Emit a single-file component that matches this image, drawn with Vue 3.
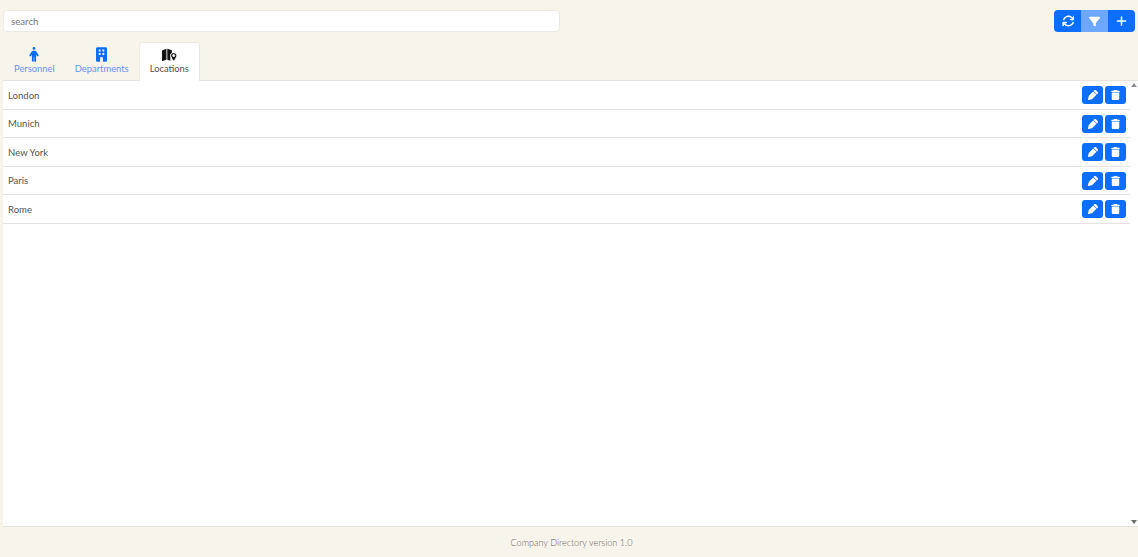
<script setup>
const locations = ['London', 'Munich', 'New York', 'Paris', 'Rome']
</script>

<template>
  <div class="page">
    <header class="top">
      <input class="search" type="text" placeholder="search" />
      <div class="btn-group">
        <button class="gbtn" aria-label="refresh">
          <svg viewBox="0 0 512 512" width="12" height="12"><path fill="#fff" d="M105 203c9-25 23-48 43-68 71-71 186-71 257 0l19 20h-56c-18 0-32 14-32 32s14 32 32 32h128c18 0 32-14 32-32V59c0-18-14-32-32-32s-32 14-32 32v51l-18-18C358-5 202-5 105 92 78 119 59 151 47 185c-6 17 3 35 19 41 17 6 35-3 39-23zM39 289c-5 1-10 4-14 8-4 4-7 9-8 14-1 3-1 6-1 9v133c0 18 14 32 32 32s32-14 32-32v-51l18 18c97 97 253 97 350 0 27-27 47-59 58-93 6-17-3-35-19-41-17-6-35 3-41 20-9 25-23 48-43 68-71 71-186 71-257 0l-19-20h56c18 0 32-14 32-32s-14-32-32-32H48c-3 0-6 0-9 1z"/></svg>
        </button>
        <button class="gbtn light" aria-label="filter">
          <svg viewBox="0 0 512 512" width="11" height="11"><path fill="#fff" d="M4 56c6-14 20-24 36-24h432c16 0 30 10 36 24 6 15 3 31-7 43L320 321v127c0 12-7 23-18 28s-24 4-33-3l-64-48c-8-6-13-15-13-25v-79L11 99C1 87-2 71 4 56z"/></svg>
        </button>
        <button class="gbtn" aria-label="add">
          <svg viewBox="0 0 448 512" width="11" height="12"><path fill="#fff" d="M256 80c0-18-14-32-32-32s-32 14-32 32v144H48c-18 0-32 14-32 32s14 32 32 32h144v144c0 18 14 32 32 32s32-14 32-32V288h144c18 0 32-14 32-32s-14-32-32-32H256V80z"/></svg>
        </button>
      </div>
    </header>

    <nav class="tabs">
      <div class="tab">
        <svg viewBox="0 0 320 512" width="10" height="15"><path fill="#0d6efd" d="M112 48a48 48 0 1 1 96 0 48 48 0 1 1-96 0zm40 304v128c0 18-14 32-32 32s-32-14-32-32V257l-29 47c-9 15-29 20-44 11s-20-29-10-44l58-96c18-29 49-47 83-47h28c34 0 65 18 83 47l58 96c9 15 5 35-10 44s-35 4-44-11l-29-47v223c0 18-14 32-32 32s-32-14-32-32V352h-16z"/></svg>
        <span>Personnel</span>
      </div>
      <div class="tab">
        <svg viewBox="0 0 384 512" width="11" height="15"><path fill="#0d6efd" fill-rule="evenodd" d="M48 0C22 0 0 22 0 48v416c0 26 22 48 48 48h288c26 0 48-22 48-48V48c0-26-22-48-48-48H48zm48 80h64v72H96V80zm128 0h64v72h-64V80zM96 200h64v72H96v-72zm128 0h64v72h-64v-72zM144 352h96v160h-96V352z"/></svg>
        <span>Departments</span>
      </div>
      <div class="tab active">
        <svg viewBox="0 0 576 512" width="15" height="14"><path fill="#111" d="M24 70 170 20v420L24 490C10 494 0 486 0 474V100c0-14 10-26 24-30zM204 20l176 50v90l-60 80v240l-116-40V20z"/><path fill="#111" stroke="#fff" stroke-width="30" fill-rule="evenodd" d="M450 170c-66 0-116 48-116 108 0 54 72 160 100 198 8 10 24 10 32 0 28-38 100-144 100-198 0-60-50-108-116-108zm0 66a42 42 0 1 1 0 84 42 42 0 1 1 0-84z"/></svg>
        <span>Locations</span>
      </div>
    </nav>

    <main class="panel">
      <div class="list">
        <div v-for="loc in locations" :key="loc" class="row">
          <span class="name">{{ loc }}</span>
          <div class="actions">
            <button class="ibtn" aria-label="edit">
              <svg viewBox="0 0 512 512" width="10" height="10"><path fill="#fff" d="M410 19c-25-25-65-25-90 0l-35 35 173 173 35-35c25-25 25-65 0-90l-83-83zM262 77 50 289c-7 7-12 16-15 25L1 469c-3 10 0 21 7 29s19 11 29 8l155-34c9-3 18-8 25-15l218-209L262 77z"/></svg>
            </button>
            <button class="ibtn" aria-label="delete">
              <svg viewBox="0 0 448 512" width="9" height="10"><path fill="#fff" d="M135 18C140 7 152 0 164 0h120c12 0 24 7 29 18l7 14h96c18 0 32 14 32 32s-14 32-32 32H32C14 96 0 82 0 64s14-32 32-32h96l7-14zM32 128h384v320c0 35-29 64-64 64H96c-35 0-64-29-64-64V128z"/></svg>
            </button>
          </div>
        </div>
      </div>
      <div class="scrollbar">
        <span class="arrow up"></span>
        <span class="arrow down"></span>
      </div>
    </main>

    <footer class="foot">Company Directory version 1.0</footer>
  </div>
</template>

<style scoped>
.page {
  height: 557px;
  display: flex;
  flex-direction: column;
  background: #f7f4ec;
  font-family: Lato, "Open Sans", sans-serif;
  color: #55504a;
  overflow: hidden;
}
.top {
  display: flex;
  justify-content: space-between;
  align-items: flex-start;
  padding: 10px 3px 0 3px;
  height: 32px;
  box-sizing: border-box;
  flex: none;
}
.search {
  width: 557px;
  height: 22px;
  box-sizing: border-box;
  border: 1px solid #eceae5;
  border-radius: 4px;
  background: #fff;
  padding: 0 7px 1px;
  font: 400 9.7px Lato, sans-serif;
  color: #555;
  outline: none;
}
.search::placeholder { color: #777; opacity: 1; }
.btn-group {
  display: flex;
  border-radius: 4px;
  overflow: hidden;
  width: 81px;
  height: 22px;
}
.gbtn {
  flex: 1;
  border: 0;
  padding: 0;
  background: #0d6efd;
  display: flex;
  align-items: center;
  justify-content: center;
}
.gbtn.light { background: #6ea8fe; }
.tabs {
  display: flex;
  align-items: flex-start;
  height: 38px;
  margin-top: 10px;
  padding-left: 4px;
  flex: none;
}
.tab {
  display: flex;
  flex-direction: column;
  align-items: center;
  justify-content: flex-start;
  padding: 5px 10px 0;
  font-size: 9.4px;
  line-height: 13px;
  color: #6c93f5;
  border-radius: 4px 4px 0 0;
}
.tab.active {
  position: relative;
  z-index: 1;
  height: 39px;
  box-sizing: border-box;
  background: #fff;
  color: #4f4f4f;
  border: 1px solid #eceae5;
  border-bottom: 0;
  padding: 5px 10px 0;
}
.panel {
  flex: 1;
  min-height: 0;
  display: flex;
  margin-left: 3px;
  background: #fff;
  border-top: 1px solid #e6e4df;
  border-bottom: 1px solid #e6e4df;
}
.list { flex: 1; min-width: 0; }
.row {
  height: 28.5px;
  box-sizing: border-box;
  display: flex;
  align-items: center;
  justify-content: space-between;
  padding: 1px 4px 0 5px;
  border-bottom: 1px solid #e4e4e4;
}
.name {
  font-size: 9.55px;
  color: #555;
}
.actions { display: flex; gap: 2px; }
.ibtn {
  width: 21px;
  height: 18px;
  border: 0;
  padding: 0;
  border-radius: 3px;
  background: #0d6efd;
  display: flex;
  align-items: center;
  justify-content: center;
}
.scrollbar {
  width: 8px;
  flex: none;
  position: relative;
  background: #fff;
}
.arrow {
  position: absolute;
  left: 1px;
  width: 0;
  height: 0;
  border-left: 3px solid transparent;
  border-right: 3px solid transparent;
}
.arrow.up { top: 2px; border-bottom: 4px solid #8e8e8e; }
.arrow.down { bottom: 2px; border-top: 4px solid #6e6e6e; }
.foot {
  height: 30px;
  flex: none;
  display: flex;
  align-items: center;
  justify-content: center;
  padding-left: 5px;
  font-size: 9.1px;
  font-weight: 300;
  color: #6d6962;
}
</style>
